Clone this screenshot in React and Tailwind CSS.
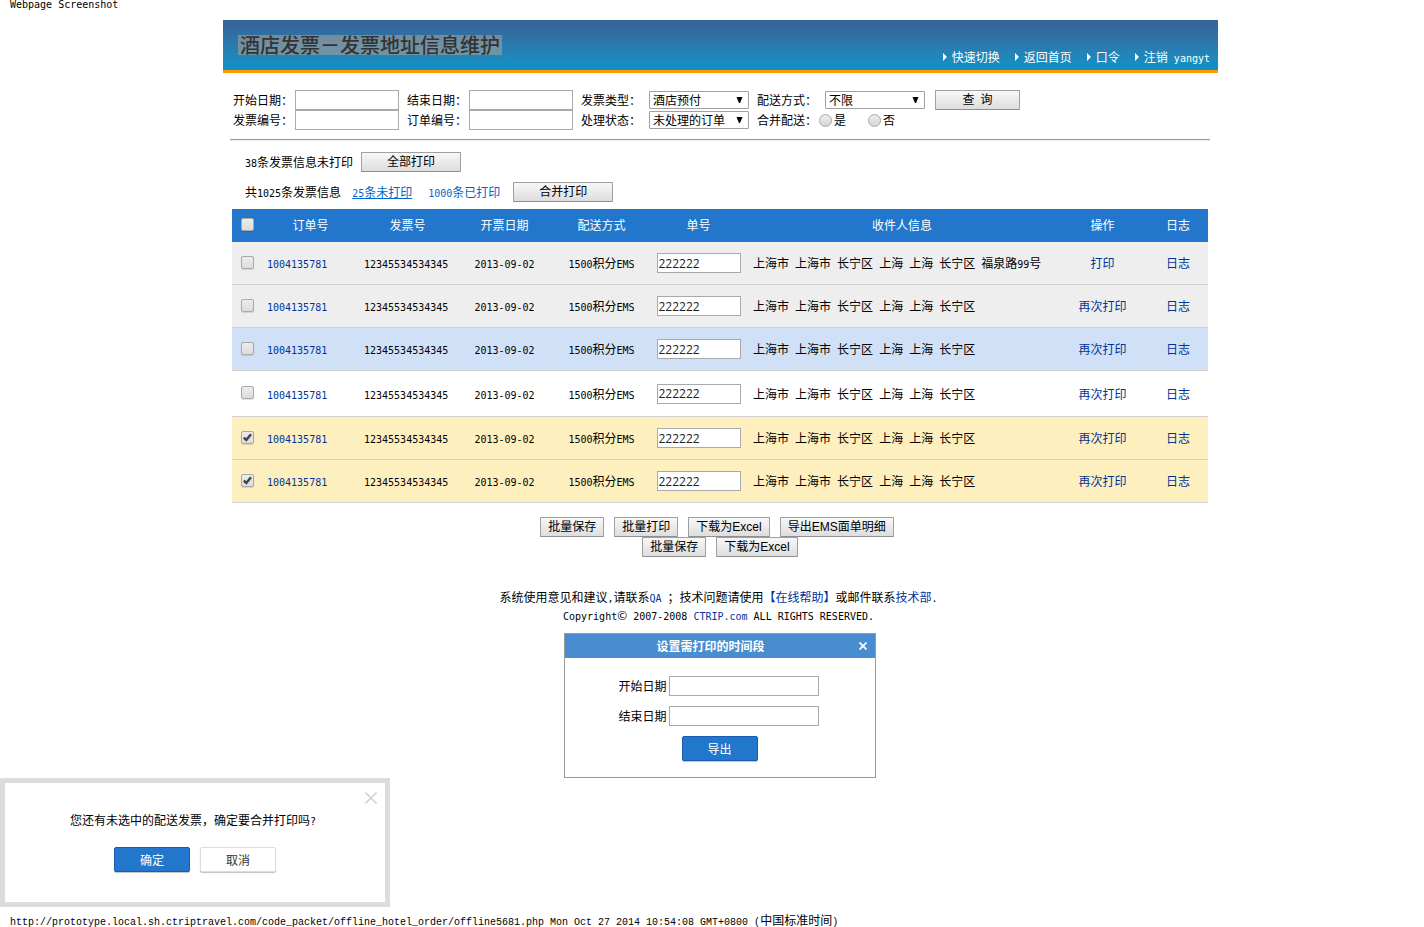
import { useState } from "react";

// Latin runs are set in a half-width face so two of them fill one CJK cell.
function T({ children, face = "font-['DejaVu_Sans_Mono',monospace]" }) {
  return children.split(/([\x20-\x7e]+)/).map((run, i) =>
    i % 2 ? (
      <span key={i} className={`whitespace-pre text-[10px] leading-none ${face}`}>{run}</span>
    ) : (
      run
    )
  );
}

function Check({ label, checked, onChange }) {
  return (
    <span className="mx-auto grid size-[13px] -translate-y-px place-items-center">
      <input
        type="checkbox"
        aria-label={label}
        checked={checked}
        onChange={onChange}
        className="col-start-1 row-start-1 size-[13px] appearance-none rounded-xs border border-[#a9a9a9] bg-linear-to-b from-[#ececec] to-[#dcdcdc] shadow-[0_1px_1px_rgba(0,0,0,0.12)]"
      />
      {checked && (
        <svg viewBox="0 0 13 13" className="pointer-events-none z-10 col-start-1 row-start-1 size-[13px]">
          <path d="M2.8 6.6 L5.3 9 L10 3.2" fill="none" stroke="#444" strokeWidth="2.5" />
        </svg>
      )}
    </span>
  );
}

function Btn({ className = "px-[7px]", children }) {
  return (
    <button
      type="button"
      className={`h-5 border border-[#a0a0a0] border-b-[#8f8f8f] bg-linear-to-b from-[#f8f8f8] to-[#dddddd] text-center leading-4 font-['Liberation_Sans','Noto_Sans_CJK_SC',sans-serif] rounded-[1px] ${className}`}
    >
      {children}
    </button>
  );
}

function Select({ id, options }) {
  return (
    <span className="grid h-[18px] items-center">
      <select id={id} className="col-start-1 row-start-1 h-[18px] w-full appearance-none rounded-[1px] border border-[#a0a0a0] bg-white pl-[3px] leading-4">
        {options.map((o) => (
          <option key={o}>{o}</option>
        ))}
      </select>
      <svg viewBox="0 0 7 6" className="pointer-events-none z-10 col-start-1 row-start-1 mr-1.5 h-1.5 w-[7px] justify-self-end">
        <path d="M0.5 0H6.5L4 6H3Z" fill="#000" />
      </svg>
    </span>
  );
}

function Radio({ id, label }) {
  return (
    <span className="flex items-center gap-0.5">
      <input id={id} type="radio" name="merge" className="size-[13px] appearance-none rounded-full border border-[#a9a9a9] bg-linear-to-b from-[#ececec] to-[#d6d6d6] checked:border-4 checked:border-[#555]" />
      <label htmlFor={id}>{label}</label>
    </span>
  );
}

const field = "h-5 border border-[#a9a9a9] bg-white px-px";

const nav = ["快速切换", "返回首页", "口令", "注销 yangyt"];

const address = "上海市 上海市 长宁区 上海 上海 长宁区";
const initialRows = [
  { tone: "bg-[#eeeeee] h-[43px]", to: address + " 福泉路99号", action: "打印", checked: false },
  { tone: "bg-[#eeeeee] h-[43px]", to: address, action: "再次打印", checked: false },
  { tone: "bg-[#d0e1f7] h-[43px]", to: address, action: "再次打印", checked: false },
  { tone: "bg-white h-[46px]", to: address, action: "再次打印", checked: false },
  { tone: "bg-[#feefbf] h-[43px]", to: address, action: "再次打印", checked: true },
  { tone: "bg-[#feefbf] h-[43px]", to: address, action: "再次打印", checked: true },
];

function InvoiceTable() {
  const [rows, setRows] = useState(initialRows);
  const toggle = (i) => setRows(rows.map((r, j) => (j === i ? { ...r, checked: !r.checked } : r)));
  const all = rows.every((r) => r.checked);
  return (
    <table className="w-full table-fixed border-separate border-spacing-0">
      <colgroup>
        <col className="w-[30px]" />
        <col className="w-[97px]" />
        <col className="w-[97px]" />
        <col className="w-[97px]" />
        <col className="w-[97px]" />
        <col className="w-[97px]" />
        <col />
        <col className="w-[91px]" />
        <col className="w-[60px]" />
      </colgroup>
      <thead>
        <tr className="h-[33px] bg-[#2277cc] text-white">
          <th><Check label="全选" checked={all} onChange={() => setRows(rows.map((r) => ({ ...r, checked: !all })))} /></th>
          {["订单号", "发票号", "开票日期", "配送方式", "单号", "收件人信息", "操作", "日志"].map((h) => (
            <th key={h} className="pb-0.5 font-normal">{h}</th>
          ))}
        </tr>
      </thead>
      <tbody>
        {rows.map((r, i) => (
          <tr key={i} className={`*:border-b *:border-[#d2d2d2] ${r.tone}`}>
            <td><Check label="选择" checked={r.checked} onChange={() => toggle(i)} /></td>
            <td className="pl-[5px]"><a href="#order" className="text-[#003399]"><T>1004135781</T></a></td>
            <td className="pl-[5px]"><T>12345534534345</T></td>
            <td className="text-center"><T>2013-09-02</T></td>
            <td className="text-center"><T>1500积分EMS</T></td>
            <td className="text-center">
              <input aria-label="单号" defaultValue="222222" className={`${field} w-[84px] align-middle font-['Open_Sans',sans-serif] text-[#222]`} />
            </td>
            <td className="pl-1.5"><T>{r.to}</T></td>
            <td className="text-center"><a href="#print" className="text-[#003399]">{r.action}</a></td>
            <td className="text-center"><a href="#log" className="text-[#003399]">日志</a></td>
          </tr>
        ))}
      </tbody>
    </table>
  );
}

const blueBtn = "h-[25px] w-19 rounded-xs border border-[#1a5cb0] bg-[#2277cc] text-white shadow-[0_1px_1px_rgba(0,0,0,0.25)]";

export default function App() {
  return (
    <div className="bg-white font-['Noto_Sans_CJK_SC',sans-serif] text-xs leading-[18px] text-black">
      <p className="-mt-1.5 mb-2 pl-2.5"><T>Webpage Screenshot</T></p>

      <div className="pl-[17px]">
        <div className="mx-auto max-w-[995px]">
          <header className="flex h-[53px] justify-between border-b-3 border-[#ff9900] bg-linear-to-b from-[#336699] from-10% to-[#0594c8] pr-2 pl-[15px]">
            <h1 className="pt-[15px]">
              <span className="block h-5 bg-[#b8a898]/50 px-0.5 text-xl leading-5 font-medium text-[#333]">酒店发票－发票地址信息维护</span>
            </h1>
            <nav className="flex items-end gap-[15px] pb-1 text-white">
              {nav.map((n) => (
                <a key={n} href="#nav" className="flex items-center gap-[5px]">
                  <svg viewBox="0 0 4 8" className="h-2 w-1"><path d="M0 0L4 4L0 8Z" fill="#fff" /></svg>
                  <span><T>{n}</T></span>
                </a>
              ))}
            </nav>
          </header>

          <main className="pr-2 pl-[7px]">
            <form className="grid grid-cols-[62px_104px_8px_62px_104px_8px_68px_100px_8px_68px_100px_10px_85px] auto-rows-[20px] items-center pt-[17px] pl-[3px]">
              <label htmlFor="start">开始日期：</label>
              <input id="start" className={field} />
              <label htmlFor="end" className="col-start-4">结束日期：</label>
              <input id="end" className={field} />
              <label htmlFor="type" className="col-start-7">发票类型：</label>
              <Select id="type" options={["酒店预付"]} />
              <label htmlFor="ship" className="col-start-10">配送方式：</label>
              <Select id="ship" options={["不限"]} />
              <Btn className="col-start-13"><T>查 询</T></Btn>

              <label htmlFor="invoice" className="col-start-1">发票编号：</label>
              <input id="invoice" className={field} />
              <label htmlFor="order" className="col-start-4">订单编号：</label>
              <input id="order" className={field} />
              <label htmlFor="state" className="col-start-7">处理状态：</label>
              <Select id="state" options={["未处理的订单"]} />
              <div className="col-span-2 col-start-10 flex">
                <span>合并配送：</span>
                <span className="ml-0.5 flex gap-[22px]">
                  <Radio id="yes" label="是" />
                  <Radio id="no" label="否" />
                </span>
              </div>
            </form>

            <hr className="mt-[9px] border-t border-b border-t-[#999] border-b-[#eee]" />

            <div className="mt-[11px] flex flex-col gap-2.5 pl-[15px]">
              <div className="flex items-center gap-2">
                <span><T>38条发票信息未打印</T></span>
                <Btn className="w-[100px]">全部打印</Btn>
              </div>
              <div className="flex items-center">
                <span><T>共1025条发票信息</T></span>
                <a href="#unprinted" className="ml-[11px] text-[#0066cc] underline"><T>25条未打印</T></a>
                <a href="#printed" className="ml-4 text-[#0066cc]"><T>1000条已打印</T></a>
                <Btn className="ml-[13px] w-[100px]">合并打印</Btn>
              </div>
            </div>

            <div className="mt-[7px] px-0.5">
              <InvoiceTable />
            </div>

            <div className="mt-3.5 flex justify-center gap-2.5 pr-1.5">
              <Btn>批量保存</Btn>
              <Btn>批量打印</Btn>
              <Btn>下载为Excel</Btn>
              <Btn>导出EMS面单明细</Btn>
            </div>
            <div className="flex justify-center gap-2.5">
              <Btn>批量保存</Btn>
              <Btn>下载为Excel</Btn>
            </div>
          </main>
        </div>

        <footer className="mt-[31px] pr-1 text-center">
          <p>
            <T>系统使用意见和建议,请联系</T>
            <a href="#qa" className="text-[#003399]"><T>QA</T></a>
            <T> ；技术问题请使用</T>
            <a href="#help" className="text-[#003399]">【在线帮助】</a>
            或邮件联系
            <a href="#tech" className="text-[#003399]">技术部</a>
            <T>.</T>
          </p>
          <p>
            <T>Copyright© 2007-2008 </T>
            <a href="#ctrip" className="text-[#003399]"><T>CTRIP.com</T></a>
            <T> ALL RIGHTS RESERVED.</T>
          </p>
        </footer>

        <div className="pr-0.5">
          <section className="mx-auto mt-[9px] w-[312px] border border-[#999] bg-white">
            <div className="flex h-6 items-center bg-[#478dd0] pr-1.5 text-white">
              <h2 className="flex-1 text-center text-xs font-bold">设置需打印的时间段</h2>
              <button type="button" aria-label="关闭" className="grid size-3 place-items-center">
                <svg viewBox="0 0 8 8" className="size-2"><path d="M0.5 0.5L7.5 7.5M7.5 0.5L0.5 7.5" stroke="#fff" strokeWidth="1.8" /></svg>
              </button>
            </div>
            <form className="flex flex-col items-center gap-2.5 pt-[18px] pb-4">
              <div className="flex items-center gap-0.5 pr-0.5">
                <label htmlFor="from">开始日期</label>
                <input id="from" className={`${field} w-[150px]`} />
              </div>
              <div className="flex items-center gap-0.5 pr-0.5">
                <label htmlFor="until">结束日期</label>
                <input id="until" className={`${field} w-[150px]`} />
              </div>
              <button type="button" className={blueBtn}>导出</button>
            </form>
          </section>
        </div>
      </div>

      <section className="w-[390px] border-5 border-[#dcdcdc] bg-white pb-[30px]">
        <div className="flex justify-end pt-[9px] pr-2">
          <button type="button" aria-label="关闭" className="size-3">
            <svg viewBox="0 0 12 12" className="size-3"><path d="M0.5 0.5L11.5 11.5M11.5 0.5L0.5 11.5" stroke="#d4d4d4" strokeWidth="1.6" /></svg>
          </button>
        </div>
        <p className="mt-[7px] pr-1 text-center"><T>您还有未选中的配送发票，确定要合并打印吗?</T></p>
        <div className="mt-[18px] flex justify-center gap-2.5">
          <button type="button" className={blueBtn}>确定</button>
          <button type="button" className="h-[25px] w-19 rounded-xs border border-[#dcdcdc] bg-white text-[#333] shadow-[0_1px_1px_rgba(0,0,0,0.25)]">取消</button>
        </div>
      </section>

      <p className="mt-1 pl-2.5">
        <T face="font-['Liberation_Mono',monospace]">http://prototype.local.sh.ctriptravel.com/code_packet/offline_hotel_order/offline5681.php Mon Oct 27 2014 10:54:08 GMT+0800 (中国标准时间)</T>
      </p>
    </div>
  );
}
